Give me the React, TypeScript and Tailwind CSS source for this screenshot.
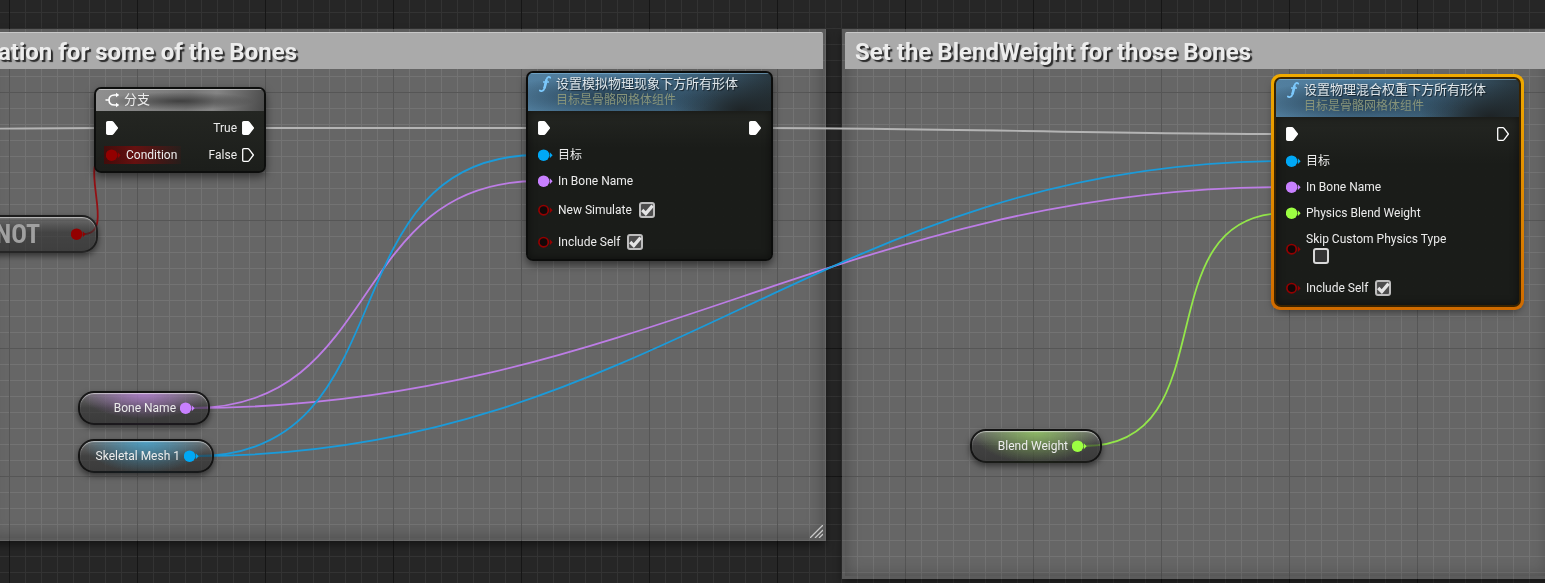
import { useId, type ReactNode } from "react";

type PinKind = "object" | "name" | "float" | "bool";

const PIN_COLOR: Record<PinKind, string> = {
  object: "text-[#00a8f6]",
  name: "text-[#c880ff]",
  float: "text-[#9cff42]",
  bool: "text-[#930000]",
};

function DataPin({ kind, connected = true }: { kind: PinKind; connected?: boolean }) {
  return (
    <svg className={`h-3 w-4 shrink-0 ${PIN_COLOR[kind]}`} viewBox="0 0 16 12" aria-hidden="true">
      {connected ? (
        <circle cx="5.6" cy="6.2" r="5.8" fill="currentColor" />
      ) : (
        <circle cx="5.6" cy="6.2" r="4.7" fill="#120808" stroke="currentColor" strokeWidth="1.7" />
      )}
      <path d="M11.8 3.2 L14.6 6.2 L11.8 9.2 Z" fill="currentColor" />
    </svg>
  );
}

function ExecPin({ connected = true }: { connected?: boolean }) {
  return (
    <svg className="h-[14px] w-3 shrink-0" viewBox="0 0 12 14" aria-hidden="true">
      <path
        d="M1.8 0.7 H5.8 Q6.6 0.7 7.1 1.3 L11.4 7 L7.1 12.7 Q6.6 13.3 5.8 13.3 H1.8 Q0.7 13.3 0.7 12.2 V1.8 Q0.7 0.7 1.8 0.7 Z"
        fill={connected ? "#fff" : "none"}
        stroke="#fff"
        strokeWidth="1.3"
        strokeLinejoin="round"
      />
    </svg>
  );
}

function CheckBox({ id, checked }: { id: string; checked: boolean }) {
  return (
    <span className="relative mx-[7px] block size-4 shrink-0">
      <input
        id={id}
        type="checkbox"
        defaultChecked={checked}
        className="peer block size-4 appearance-none rounded-[3px] border-2 border-[#d8d8d8] bg-[#343434] checked:border-[#bdbdbd] checked:bg-[#4d4d4d]"
      />
      <svg
        className="pointer-events-none absolute inset-0 hidden size-4 peer-checked:block"
        viewBox="0 0 16 16"
        aria-hidden="true"
      >
        <path d="M3.2 8 L6.8 11.6 L13.6 3.6" fill="none" stroke="#e4e4e4" strokeWidth="3.2" />
      </svg>
    </span>
  );
}

function InputRow({ kind, children }: { kind: PinKind; children: ReactNode }) {
  return (
    <div className="flex h-[26px] items-center gap-1">
      <DataPin kind={kind} />
      <span>{children}</span>
    </div>
  );
}

function CheckRow({ label, checked, stacked = false }: { label: string; checked: boolean; stacked?: boolean }) {
  const id = useId();
  return (
    <div className={`flex items-center gap-1 ${stacked ? "h-[46px]" : "h-8"}`}>
      <DataPin kind="bool" connected={false} />
      <div className={stacked ? "flex flex-col gap-px pb-1" : "flex items-center"}>
        <label htmlFor={id}>{label}</label>
        <CheckBox id={id} checked={checked} />
      </div>
    </div>
  );
}

function FunctionNode({
  title,
  place,
  selected = false,
  outConnected,
  children,
}: {
  title: string;
  place: string;
  selected?: boolean;
  outConnected: boolean;
  children: ReactNode;
}) {
  return (
    <article
      className={`absolute w-[247px] rounded-[8px] shadow-[0_4px_8px_rgba(0,0,0,0.5)] ${place} ${
        selected ? "before:absolute before:-inset-[3px] before:rounded-[9px] before:bg-linear-to-b before:from-[#f0aa00] before:to-[#cf6a00]" : ""
      }`}
    >
      <div
        className={`relative overflow-hidden rounded-[7px] border-2 ${
          selected ? "border-[#3a2300] bg-[#1c1e1b]" : "border-[#0b0c0b] bg-[#1c1e1b]/95"
        }`}
      >
        <header className="flex h-[38px] items-start gap-[5px] bg-[radial-gradient(ellipse_110px_22px_at_34%_62%,rgba(24,42,56,0.75),transparent),radial-gradient(ellipse_70px_34px_at_88%_100%,rgba(28,32,33,0.9),transparent),linear-gradient(100deg,#527f9f_0%,#4b7796_45%,#3a5a70_72%,#27343b_100%)] pt-[3px] pl-[11px] shadow-[inset_0_1px_0_rgba(130,185,220,0.6)]">
          <svg className="h-4 w-3 shrink-0" viewBox="0 0 12 16" aria-hidden="true">
            <path
              d="M11.3 1.7 C10 0.4 8.3 0.7 7.6 3.2 C6.9 5.6 6.2 10.4 5.3 12.6 C4.3 15.3 2.1 15.6 0.8 14.5"
              fill="none"
              stroke="#7cc8fb"
              strokeWidth="1.8"
              strokeLinecap="round"
            />
            <path d="M7.5 3.6 C6.9 6 6.2 10 5.3 12.4" fill="none" stroke="#7cc8fb" strokeWidth="2.6" />
            <path d="M4 6 H10" stroke="#7cc8fb" strokeWidth="1.3" />
          </svg>
          <div className="-mt-px whitespace-nowrap">
            <h3 className="text-[13px] leading-[17px] text-[#dfe6ea] [text-shadow:1px_1px_1px_rgba(0,0,0,0.6)]">{title}</h3>
            <p className="text-xs leading-[17px] text-[#87947a]">目标是骨骼网格体组件</p>
          </div>
        </header>
        <div className="bg-linear-to-b from-[#242622] to-[#1a1c19] to-25% px-[10px] pt-[3px] pb-px shadow-[inset_0_0_8px_rgba(0,0,0,0.5)]">
          <div className="flex h-7 items-center justify-between">
            <ExecPin />
            <ExecPin connected={outConnected} />
          </div>
          {children}
        </div>
      </div>
    </article>
  );
}

function VariableNode({ label, kind, place, glow }: { label: string; kind: PinKind; place: string; glow: string }) {
  return (
    <article
      className={`absolute flex h-[34px] items-center justify-end gap-1 rounded-[16px] border-2 border-[#101010]/90 pr-3 shadow-[0_3px_6px_rgba(0,0,0,0.5),inset_0_1px_1px_rgba(255,255,255,0.55)] ${place} ${glow}`}
    >
      <span className="whitespace-nowrap">{label}</span>
      <DataPin kind={kind} />
    </article>
  );
}

function Comment({ title, place, handle = false }: { title: string; place: string; handle?: boolean }) {
  return (
    <section className={`absolute p-[3px] ${place}`}>
      <div className="absolute inset-0 bg-[#404040] mix-blend-plus-lighter" />
      <div className="absolute inset-0 border-[3px] border-black/10 shadow-[inset_0_0_16px_rgba(0,0,0,0.28),0_4px_8px_rgba(0,0,0,0.45)]" />
      <h2 className="relative h-[37px] overflow-hidden rounded-t-[2px] border-t border-[#c8c8c8] bg-[#aaaaaa] pl-[10px] text-2xl leading-[39px] font-bold whitespace-nowrap text-[#ededed] [text-shadow:2px_2px_1px_rgba(30,30,30,0.9)]">
        {title}
      </h2>
      {handle && (
        <svg className="absolute right-[3px] bottom-[3px] size-[13px]" viewBox="0 0 13 13" aria-hidden="true">
          <path d="M0 13 L13 0 M5 13 L13 5 M9 13 L13 9" stroke="#c9c9c9" strokeWidth="1.3" />
        </svg>
      )}
    </section>
  );
}

interface Wire {
  from: [number, number];
  to: [number, number];
  color: string;
}

const WIRES: Wire[] = [
  { from: [-60, 129], to: [107, 128], color: "#b4b4b4" },
  { from: [254, 128], to: [538, 128], color: "#b4b4b4" },
  { from: [761, 128], to: [1286, 134], color: "#b4b4b4" },
  { from: [84, 234], to: [108, 155], color: "#941014" },
  { from: [193, 408], to: [538, 181], color: "#bd7de6" },
  { from: [193, 408], to: [1286, 187], color: "#bd7de6" },
  { from: [197, 456], to: [538, 155], color: "#1a9bda" },
  { from: [197, 456], to: [1286, 161], color: "#1a9bda" },
  { from: [1085, 446], to: [1286, 213], color: "#93e64a" },
];

function wirePath({ from: [x1, y1], to: [x2, y2] }: Wire) {
  const pull = (Math.abs(x2 - x1) + Math.abs(y2 - y1)) / 3;
  return `M${x1} ${y1} C${x1 + pull} ${y1} ${x2 - pull} ${y2} ${x2} ${y2}`;
}

export default function App() {
  return (
    <main className="relative isolate min-h-screen w-full overflow-hidden bg-[#262626] bg-[linear-gradient(to_right,#161616_1px,transparent_1px),linear-gradient(to_bottom,#161616_1px,transparent_1px),linear-gradient(to_right,#333333_1px,transparent_1px),linear-gradient(to_bottom,#333333_1px,transparent_1px)] bg-[size:128px_128px,128px_128px,16px_16px,16px_16px] bg-[position:9px_92px,9px_92px,9px_12px,9px_12px] font-['Roboto','Noto_Sans_CJK_SC',sans-serif] text-xs leading-4 text-[#ececec]">
      <Comment title="ation for some of the Bones" place="-left-[15px] top-[29px] h-[512px] w-[841px]" handle />
      <Comment title="Set the BlendWeight for those Bones" place="left-[842px] top-[29px] h-[550px] w-[710px]" />

      <svg className="absolute top-0 left-0 h-[583px] w-[1545px]" viewBox="0 0 1545 583" fill="none" aria-hidden="true">
        {WIRES.map((wire, i) => (
          <path key={i} d={wirePath(wire)} stroke={wire.color} strokeWidth="1.8" />
        ))}
      </svg>

      <article className="absolute top-[87px] left-[94px] w-[172px] overflow-hidden rounded-[7px] border-2 border-[#0b0c0b]/90 bg-[#1c1e1b]/90 shadow-[0_4px_8px_rgba(0,0,0,0.5)]">
        <header className="flex h-[22px] items-center gap-1 bg-[radial-gradient(ellipse_75px_9px_at_50%_55%,rgba(45,45,45,0.75),transparent),linear-gradient(105deg,#909090_0%,#777777_55%,#858585_70%,#4a4a4a_100%)] pl-[9px] shadow-[inset_0_1px_0_rgba(255,255,255,0.45)]">
          <svg className="h-4 w-[15px] shrink-0" viewBox="0 0 15 16" fill="none" aria-hidden="true">
            <path d="M0.5 8 H4 M12 3 H9.5 C6 3 4 5 4 8 C4 11 6 13 9.5 13 H12" stroke="#fff" strokeWidth="1.6" />
            <path d="M11 0.8 L14.3 3 L11 5.2 Z M11 10.8 L14.3 13 L11 15.2 Z" fill="#fff" />
          </svg>
          <h3 className="text-[13px] leading-4">分支</h3>
        </header>
        <div className="bg-linear-to-b from-[#242622]/90 to-[#1a1c19]/80 px-[10px] pt-[3px] pb-[3px]">
          <div className="flex h-7 items-center justify-between">
            <ExecPin />
            <span className="flex items-center gap-[5px]">
              True
              <ExecPin />
            </span>
          </div>
          <div className="flex h-[26px] items-center justify-between">
            <span className="-ml-0.5 flex h-[18px] items-center gap-1 bg-linear-to-r from-[#5a0000]/60 via-[#780d0d]/80 via-40% to-[#780d0d]/10 pr-1 pl-0.5">
              <DataPin kind="bool" />
              Condition
            </span>
            <span className="flex items-center gap-[5px]">
              False
              <ExecPin connected={false} />
            </span>
          </div>
        </div>
      </article>

      <article className="absolute top-[215px] -left-[30px] flex h-[38px] w-32 items-center justify-end gap-[31px] rounded-[16px] border-2 border-[#151515]/80 bg-linear-to-b from-[#707070]/60 via-[#2c2c2c]/60 via-45% to-[#242424]/60 pr-[9px] shadow-[0_3px_6px_rgba(0,0,0,0.5),inset_0_1px_1px_rgba(255,255,255,0.55)]">
        <span className="font-['Roboto_Condensed','Roboto',sans-serif] text-[26px] leading-8 font-bold text-[#a0a0a0]">NOT</span>
        <DataPin kind="bool" />
      </article>

      <FunctionNode title="设置模拟物理现象下方所有形体" place="top-[71px] left-[526px]" outConnected>
        <InputRow kind="object">目标</InputRow>
        <InputRow kind="name">In Bone Name</InputRow>
        <CheckRow label="New Simulate" checked />
        <CheckRow label="Include Self" checked />
      </FunctionNode>

      <FunctionNode title="设置物理混合权重下方所有形体" place="top-[77px] left-[1274px]" selected outConnected={false}>
        <InputRow kind="object">目标</InputRow>
        <InputRow kind="name">In Bone Name</InputRow>
        <InputRow kind="float">Physics Blend Weight</InputRow>
        <CheckRow label="Skip Custom Physics Type" checked={false} stacked />
        <CheckRow label="Include Self" checked />
      </FunctionNode>

      <VariableNode
        label="Bone Name"
        kind="name"
        place="top-[391px] left-[78px] w-[132px]"
        glow="bg-[radial-gradient(ellipse_64px_26px_at_50%_0%,rgba(190,130,225,0.75),transparent),linear-gradient(to_bottom,rgba(116,116,116,0.6),rgba(40,40,40,0.6)_50%,rgba(30,30,30,0.6))]"
      />
      <VariableNode
        label="Skeletal Mesh 1"
        kind="object"
        place="top-[439px] left-[78px] w-[136px]"
        glow="bg-[radial-gradient(ellipse_64px_32px_at_50%_0%,rgba(70,170,215,0.8),transparent),linear-gradient(to_bottom,rgba(116,116,116,0.6),rgba(40,40,40,0.6)_50%,rgba(30,30,30,0.6))]"
      />
      <VariableNode
        label="Blend Weight"
        kind="float"
        place="top-[429px] left-[970px] w-[132px]"
        glow="bg-[radial-gradient(ellipse_64px_32px_at_50%_0%,rgba(150,205,100,0.8),transparent),linear-gradient(to_bottom,rgba(116,116,116,0.6),rgba(40,40,40,0.6)_50%,rgba(30,30,30,0.6))]"
      />
    </main>
  );
}
